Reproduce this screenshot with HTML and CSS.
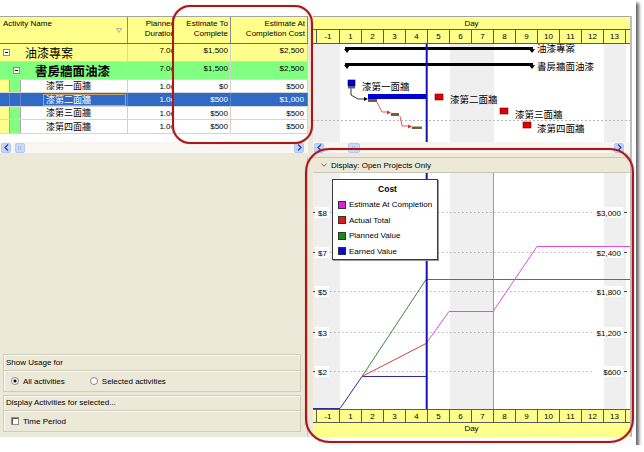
FILE: index.html
```html
<!DOCTYPE html>
<html lang="zh-Hant">
  <head>
    <meta charset="UTF-8" />
    <meta name="viewport" content="width=device-width, initial-scale=1.0" />
    <title>Cost Usage Profile</title>
    <link rel="stylesheet" href="styles.css">
  </head>
  <body>
    <div class="frame">
      <div class="app">

        <!-- activity table -->
        <section class="table-pane">
          <div class="thead">
            <div class="th col-name">
              <span>Activity Name</span>
              <svg class="filter" width="6" height="5" viewBox="0 0 6 5"><path d="M0.5 0.5 H5.5 L3 4.5 Z" fill="none" stroke="#9a9a9a" stroke-width="0.8"/></svg>
            </div>
            <div class="th col-dur"><span class="clip">Planned<br>Duration</span></div>
            <div class="th col-etc">Estimate To<br>Complete</div>
            <div class="th col-eac">Estimate At<br>Completion Cost</div>
          </div>

          <div class="tr proj">
            <div class="td col-name"><span class="tog"></span><span class="cjk title">油漆專案</span></div>
            <div class="td col-dur"><span class="clip">7.0d</span></div>
            <div class="td col-etc">$1,500</div>
            <div class="td col-eac">$2,500</div>
          </div>
          <div class="tr wbs">
            <div class="td col-name"><span class="band y"></span><span class="tog"></span><span class="cjk title bold">書房牆面油漆</span></div>
            <div class="td col-dur"><span class="clip">7.0d</span></div>
            <div class="td col-etc">$1,500</div>
            <div class="td col-eac">$2,500</div>
          </div>
          <div class="tr act short">
            <div class="td col-name"><span class="band y"></span><span class="band g"></span><span class="cjk name">漆第一面牆</span></div>
            <div class="td col-dur"><span class="clip">1.0d</span></div>
            <div class="td col-etc">$0</div>
            <div class="td col-eac">$500</div>
          </div>
          <div class="tr act sel">
            <div class="td col-name"><span class="band y"></span><span class="band g"></span><span class="cjk name">漆第二面牆</span></div>
            <div class="td col-dur"><span class="clip">1.0d</span></div>
            <div class="td col-etc">$500</div>
            <div class="td col-eac">$1,000</div>
          </div>
          <div class="tr act short">
            <div class="td col-name"><span class="band y"></span><span class="band g"></span><span class="cjk name">漆第三面牆</span></div>
            <div class="td col-dur"><span class="clip">1.0d</span></div>
            <div class="td col-etc">$500</div>
            <div class="td col-eac">$500</div>
          </div>
          <div class="tr act">
            <div class="td col-name"><span class="band y"></span><span class="band g"></span><span class="cjk name">漆第四面牆</span></div>
            <div class="td col-dur"><span class="clip">1.0d</span></div>
            <div class="td col-etc">$500</div>
            <div class="td col-eac">$500</div>
          </div>
          <div class="tbody-rest"></div>

          <div class="hscroll">
            <span class="sb-btn"><svg width="5" height="7" viewBox="0 0 5 7"><path d="M4 0.5 L1 3.5 L4 6.5" fill="none" stroke="#2b4c9c" stroke-width="1.4"/></svg></span>
            <span class="sb-thumb t-left"></span>
            <span class="sb-fill"></span>
            <span class="sb-btn b-right-l"><svg width="5" height="7" viewBox="0 0 5 7"><path d="M1 0.5 L4 3.5 L1 6.5" fill="none" stroke="#2b4c9c" stroke-width="1.4"/></svg></span>
          </div>
        </section>

        <!-- gantt -->
        <section class="gantt-pane">
          <div class="ts-title top">Day</div>
          <div class="ts-days top">
            <span class="d part"></span><span class="d first">-1</span><span class="d">1</span><span class="d">2</span><span class="d">3</span><span class="d">4</span><span class="d">5</span><span class="d">6</span><span class="d">7</span><span class="d">8</span><span class="d">9</span><span class="d">10</span><span class="d">11</span><span class="d">12</span><span class="d">13</span><span class="d part"></span>
          </div>

          <svg class="gantt" width="317" height="98" viewBox="0 0 317 98">
            <rect x="0" y="0" width="27" height="98" fill="#efefef"/>
            <rect x="137" y="0" width="44" height="98" fill="#efefef"/>
            <rect x="291" y="0" width="22" height="98" fill="#efefef"/>
            <line x1="0" y1="76.5" x2="317" y2="76.5" stroke="#b8b8b8" stroke-dasharray="2 2"/>

            <!-- summary bars -->
            <rect x="32" y="3" width="188" height="3" fill="#000"/>
            <path d="M31 5 H37 L34 9 Z M216 5 H222 L219 9 Z" fill="#000"/>
            <text x="224" y="7.5" class="glabel">油漆專案</text>
            <rect x="32" y="19" width="188" height="3" fill="#000"/>
            <path d="M31 21 H37 L34 25 Z M216 21 H222 L219 25 Z" fill="#000"/>
            <text x="224" y="26" class="glabel">書房牆面油漆</text>

            <!-- activity 1 -->
            <rect x="35" y="36" width="7" height="6" fill="#0000d0" stroke="#000060" stroke-width="0.6"/>
            <rect x="35" y="42" width="7" height="2.5" fill="#606060"/>
            <text x="49" y="45.5" class="glabel">漆第一面牆</text>
            <path d="M38 44.5 V51 L45 55 H53" fill="none" stroke="#000" stroke-width="0.8"/>
            <path d="M51 53 L55 55 L51 57 Z" fill="#000"/>

            <!-- activity 2 -->
            <rect x="55" y="50" width="59" height="5" fill="#0000d0"/>
            <rect x="55" y="55" width="9" height="3" fill="#6d6232"/>
            <rect x="122" y="50" width="8" height="6" fill="#e00000" stroke="#700" stroke-width="0.6"/>
            <text x="137" y="59" class="glabel">漆第二面牆</text>

            <!-- baseline links -->
            <path d="M64 58 L69 68 H75" fill="none" stroke="#e03030" stroke-width="0.8"/>
            <path d="M74 66.5 L78 68.5 L74 70.5 Z" fill="#e03030"/>
            <rect x="78" y="69" width="8" height="3" fill="#6d6232"/>
            <path d="M87 72 L89 82 H96" fill="none" stroke="#e03030" stroke-width="0.8"/>
            <path d="M95 80.5 L99 82.5 L95 84.5 Z" fill="#e03030"/>
            <rect x="99" y="82.5" width="10" height="2.5" fill="#6d6232"/>

            <!-- activity 3 / 4 -->
            <rect x="187" y="64" width="8" height="6" fill="#e00000" stroke="#700" stroke-width="0.6"/>
            <text x="202" y="73.5" class="glabel">漆第三面牆</text>
            <rect x="210" y="78" width="8" height="6" fill="#e00000" stroke="#700" stroke-width="0.6"/>
            <text x="224" y="87.5" class="glabel">漆第四面牆</text>

            <line x1="113.7" y1="0" x2="113.7" y2="98" stroke="#1414b4" stroke-width="2"/>
          </svg>

          <div class="hscroll">
            <span class="sb-btn"><svg width="5" height="7" viewBox="0 0 5 7"><path d="M4 0.5 L1 3.5 L4 6.5" fill="none" stroke="#2b4c9c" stroke-width="1.4"/></svg></span>
            <span class="sb-thumb t-gantt"></span>
            <span class="sb-fill"></span>
            <span class="sb-btn b-right-g"><svg width="5" height="7" viewBox="0 0 5 7"><path d="M1 0.5 L4 3.5 L1 6.5" fill="none" stroke="#2b4c9c" stroke-width="1.4"/></svg></span>
          </div>
        </section>

        <!-- options -->
        <section class="options-pane">
          <div class="group g-usage">
            <div class="group-head">Show Usage for</div>
            <div class="group-body">
              <span class="radio on"></span><span class="opt-label">All activities</span>
              <span class="radio second"></span><span class="opt-label">Selected activities</span>
            </div>
          </div>
          <div class="group g-display">
            <div class="group-head">Display Activities for selected...</div>
            <div class="group-body">
              <span class="check"></span><span class="opt-label">Time Period</span>
            </div>
          </div>
        </section>

        <!-- cost profile -->
        <section class="chart-pane">
          <div class="disp-bar">
            <svg width="6" height="4" viewBox="0 0 6 4"><path d="M0.5 0.5 L3 3.3 L5.5 0.5" fill="none" stroke="#666" stroke-width="0.9"/></svg>
            <span>Display: Open Projects Only</span>
          </div>

          <div class="chart">
            <svg width="317" height="236" viewBox="0 0 317 236">
              <rect x="0" y="0" width="27" height="236" fill="#efefef"/>
              <rect x="137" y="0" width="44" height="236" fill="#efefef"/>
              <rect x="291" y="0" width="22" height="236" fill="#efefef"/>
              <line x1="180.5" y1="0" x2="180.5" y2="236" stroke="#9c9c9c"/>

              <g stroke="#b4b4b4" stroke-dasharray="1.5 2.5">
                <line x1="17" y1="39.5" x2="281" y2="39.5"/>
                <line x1="17" y1="79.5" x2="281" y2="79.5"/>
                <line x1="17" y1="118.5" x2="281" y2="118.5"/>
                <line x1="17" y1="159.5" x2="281" y2="159.5"/>
                <line x1="17" y1="198.5" x2="281" y2="198.5"/>
              </g>

              <g fill="#fff">
                <rect x="2" y="34" width="14" height="11"/>
                <rect x="2" y="74" width="14" height="11"/>
                <rect x="2" y="113" width="14" height="11"/>
                <rect x="2" y="154" width="14" height="11"/>
                <rect x="2" y="193" width="14" height="11"/>
                <rect x="281" y="34" width="29" height="11"/>
                <rect x="281" y="74" width="29" height="11"/>
                <rect x="281" y="113" width="29" height="11"/>
                <rect x="281" y="154" width="29" height="11"/>
                <rect x="289" y="193" width="21" height="11"/>
              </g>
              <g stroke="#444">
                <line x1="0" y1="39.5" x2="2" y2="39.5"/>
                <line x1="0" y1="79.5" x2="2" y2="79.5"/>
                <line x1="0" y1="118.5" x2="2" y2="118.5"/>
                <line x1="0" y1="159.5" x2="2" y2="159.5"/>
                <line x1="0" y1="198.5" x2="2" y2="198.5"/>
                <line x1="311" y1="39.5" x2="314" y2="39.5"/>
                <line x1="311" y1="79.5" x2="314" y2="79.5"/>
                <line x1="311" y1="118.5" x2="314" y2="118.5"/>
                <line x1="311" y1="159.5" x2="314" y2="159.5"/>
                <line x1="311" y1="198.5" x2="314" y2="198.5"/>
              </g>
              <g class="axis-label">
                <text x="5" y="42.5">$8</text>
                <text x="5" y="82.5">$7</text>
                <text x="5" y="121.5">$5</text>
                <text x="5" y="162.5">$3</text>
                <text x="5" y="201.5">$2</text>
              </g>
              <g class="axis-label" text-anchor="end">
                <text x="308" y="42.5">$3,000</text>
                <text x="308" y="82.5">$2,400</text>
                <text x="308" y="121.5">$1,800</text>
                <text x="308" y="162.5">$1,200</text>
                <text x="308" y="201.5">$600</text>
              </g>

              <g fill="none" stroke-width="1">
                <path d="M0 235.5 H27 L49 203.5 H113" stroke="#2a2aa8"/>
                <path d="M49 203.5 L113 106.5 H317" stroke="#3a8a3a"/>
                <path d="M49 203.5 L113 170.5" stroke="#d24040"/>
                <path d="M113 170.5 L136 138.5 H180 L224 73.5 H317" stroke="#dd4ee0"/>
              </g>
              <line x1="113.7" y1="0" x2="113.7" y2="236" stroke="#1414b4" stroke-width="2"/>
            </svg>

            <div class="legend">
              <div class="lg-title">Cost</div>
              <div class="lg-item"><i class="sw sw-eac"></i>Estimate At Completion</div>
              <div class="lg-item"><i class="sw sw-act"></i>Actual Total</div>
              <div class="lg-item"><i class="sw sw-pv"></i>Planned Value</div>
              <div class="lg-item"><i class="sw sw-ev"></i>Earned Value</div>
            </div>
          </div>

          <div class="ts-days bottom">
            <span class="d part"></span><span class="d first">-1</span><span class="d">1</span><span class="d">2</span><span class="d">3</span><span class="d">4</span><span class="d">5</span><span class="d">6</span><span class="d">7</span><span class="d">8</span><span class="d">9</span><span class="d">10</span><span class="d">11</span><span class="d">12</span><span class="d">13</span><span class="d part"></span>
          </div>
          <div class="ts-title bottom">Day</div>
        </section>
      </div>

      <!-- review marks -->
      <div class="mark mark-cols"></div>
      <div class="mark mark-chart"></div>
    </div>
  </body>
</html>
```

FILE: styles.css
```css
* {
  margin: 0;
  padding: 0;
  box-sizing: border-box;
}

:root {
  --yellow: #ffff8c;
  --green: #80ff80;
  --beige: #ece9d8;
  --select: #316ac5;
}

body {
  background: #fff;
  color: #000;
  font-family: "Liberation Sans", Arial, sans-serif;
  font-size: 8px;
}

.cjk {
  font-family: "Noto Sans CJK TC", "Noto Sans CJK SC", sans-serif;
}

.frame {
  position: relative;
  width: 636px;
  height: 445px;
  padding-top: 16px;
  background: #fff;
  box-shadow: 3px 3px 3px rgba(0, 0, 0, 0.6);
}

.app {
  display: grid;
  grid-template-columns: 308px 5px 317px;
  grid-template-rows: 137px 4px 280px;
  width: 632px;
  border-right: 2px solid #bdbdbd;
  background: var(--beige);
}

/* ---------- activity table ---------- */

.table-pane {
  grid-area: 1 / 1;
  display: flex;
  flex-direction: column;
  background: #fff;
}

.thead {
  display: flex;
  height: 28px;
  flex: none;
  background: var(--yellow);
  border-top: 1px solid #a4a4a4;
  border-bottom: 1px solid #6e6e6e;
}

.th {
  padding: 2px 2px 0 0;
  line-height: 10px;
  text-align: right;
  white-space: nowrap;
  overflow: hidden;
  border-right: 1px solid #8a8a8a;
}

.th.col-name {
  display: flex;
  justify-content: space-between;
  padding-left: 3px;
  text-align: left;
}

.filter {
  margin: 9px 3px 0 0;
}

.col-name { width: 128px; flex: none; }
.col-dur  { width: 45px;  flex: none; }
.col-etc  { width: 58px;  flex: none; }
.col-eac  { width: 77px;  flex: none; }

.th.col-dur,
.td.col-dur {
  padding-right: 0;
}

.clip {
  display: block;
  margin-right: -3px;
}

.tr {
  display: flex;
  height: 14px;
  flex: none;
  border-bottom: 1px solid #d6d6d6;
}

.tr.short {
  height: 13px;
}

.td {
  display: flex;
  align-items: center;
  justify-content: flex-end;
  padding-right: 2px;
  white-space: nowrap;
  overflow: hidden;
  border-right: 1px solid #d2d2d2;
}

.td.col-eac {
  padding-right: 3px;
}

.td.col-name {
  justify-content: flex-start;
  align-items: stretch;
  padding-right: 0;
}

.proj,
.wbs {
  height: 18px;
}

.proj .td,
.wbs .td {
  align-items: flex-start;
  padding-top: 2px;
}

.proj .td.col-name,
.wbs .td.col-name {
  align-items: center;
  padding-top: 0;
}

.proj {
  background: var(--yellow);
}

.proj .td.col-name {
  padding-left: 3px;
}

.wbs {
  background: var(--green);
}

.tog {
  width: 7px;
  height: 7px;
  flex: none;
  border: 1px solid #8c8c8c;
  background: linear-gradient(#000, #000) center / 3px 1px no-repeat, #fff;
}

.wbs .tog {
  margin-left: 3px;
}

.title {
  margin-left: 15px;
  font-size: 12px;
  line-height: 14px;
}

.title.bold {
  font-size: 12.5px;
  font-weight: 700;
}

.band {
  flex: none;
  border-right: 1px solid #a9a9a9;
}

.band.y {
  width: 10px;
  background: var(--yellow);
}

.band.g {
  width: 11px;
  background: var(--green);
}

.name {
  width: 83px;
  margin-left: 22px;
  padding-left: 2px;
  font-size: 9px;
  line-height: 10px;
  border: 1px solid transparent;
  align-self: center;
}

.sel {
  background: var(--select);
  color: #fff;
}

.sel .band {
  background: var(--select);
  border-color: #5d83c9;
}

.sel .td {
  border-color: #5d83c9;
}

.sel .name {
  border-color: #c9a46a;
}

.tbody-rest {
  flex: 1;
}

/* ---------- scroll bars ---------- */

.hscroll {
  display: flex;
  align-items: center;
  height: 11px;
  flex: none;
  background: #f7f6f2;
}

.sb-btn {
  display: flex;
  align-items: center;
  justify-content: center;
  width: 10px;
  height: 10px;
  flex: none;
  margin-left: 1px;
  background: #c5d5f9;
  border: 1px solid #b3c6f2;
  border-radius: 2px;
}

.sb-thumb {
  width: 10px;
  height: 10px;
  flex: none;
  background: linear-gradient(90deg, transparent 3px, #a9bde9 3px, #a9bde9 4px, transparent 4px, transparent 5px, #a9bde9 5px, #a9bde9 6px, transparent 6px) center / 10px 4px no-repeat, #cbdafa;
  border: 1px solid #b6c8f1;
  border-radius: 2px;
}

.t-left {
  margin-left: 4px;
}

.t-gantt {
  margin-left: 24px;
  width: 12px;
}

.sb-fill {
  flex: 1;
}

.b-right-l {
  margin-right: 4px;
}

.b-right-g {
  margin-right: 6px;
}

/* ---------- gantt ---------- */

.gantt-pane {
  grid-area: 1 / 3;
  display: flex;
  flex-direction: column;
  background: #fff;
}

.ts-title {
  height: 14px;
  flex: none;
  line-height: 13px;
  text-align: center;
  background: var(--yellow);
}

.ts-title.top {
  border-top: 1px solid #a4a4a4;
  border-bottom: 1px solid #5a5a5a;
}

.ts-days {
  display: flex;
  height: 14px;
  flex: none;
  background: var(--yellow);
}

.ts-days.top {
  border-bottom: 1px solid #5a5a5a;
}

.ts-days.bottom {
  border-top: 1px solid #5a5a5a;
  border-bottom: 1px solid #5a5a5a;
}

.ts-title.bottom {
  line-height: 12px;
}

.d {
  width: 22px;
  flex: none;
  line-height: 13px;
  text-align: center;
  border-right: 1px solid #5a5a5a;
}

.d.part {
  width: 4px;
}

.d.part:last-child {
  border-right: none;
}

.d.first {
  width: 23px;
}

.gantt {
  display: block;
  flex: none;
}

.glabel {
  font-family: "Noto Sans CJK TC", "Noto Sans CJK SC", sans-serif;
  font-size: 9.5px;
  fill: #000;
}

/* ---------- options ---------- */

.options-pane {
  grid-area: 3 / 1;
  display: flex;
  flex-direction: column;
  justify-content: flex-end;
  gap: 3px;
  padding: 0 6px 5px 3px;
  border-right: 1px solid #c9c6b6;
}

.group {
  border: 1px solid #cfccbc;
  box-shadow: inset 1px 1px 0 #fbfaf6;
}

.group-head {
  height: 16px;
  padding-left: 2px;
  line-height: 15px;
  border-bottom: 1px solid #cfccbc;
  box-shadow: 0 1px 0 #fbfaf6;
}

.g-display .group-head {
  height: 15px;
  line-height: 14px;
}

.group-body {
  display: flex;
  align-items: center;
  height: 20px;
  padding-left: 7px;
}

.opt-label {
  margin-left: 4px;
}

.radio {
  width: 8px;
  height: 8px;
  flex: none;
  border-radius: 50%;
  border: 1px solid #8b8b8b;
  background: #fff;
}

.radio.on {
  background: radial-gradient(circle, #111 0 1.3px, #fff 1.8px);
}

.radio.second {
  margin-left: 25px;
}

.check {
  width: 8px;
  height: 8px;
  flex: none;
  background: #fff;
  border: 1px solid #8d8d8d;
  box-shadow: inset 1px 1px 0 #5a5a5a;
}

/* ---------- cost chart ---------- */

.chart-pane {
  grid-area: 3 / 3;
  display: flex;
  flex-direction: column;
  background: #fff;
}

.disp-bar {
  display: flex;
  align-items: center;
  gap: 4px;
  height: 16px;
  flex: none;
  padding-left: 8px;
  background: var(--beige);
  border-top: 1px solid #c9c6b6;
  border-bottom: 1px solid #c9c6b6;
}

.chart {
  position: relative;
  height: 236px;
  flex: none;
}

.chart svg {
  display: block;
}

.axis-label {
  font-family: "Liberation Sans", Arial, sans-serif;
  font-size: 8px;
  fill: #000;
}

.legend {
  position: absolute;
  left: 19px;
  top: 6px;
  width: 106px;
  height: 81px;
  padding: 0 0 0 5px;
  background: #fff;
  border: 1px solid #3a3a3a;
  box-shadow: 1px 1px 0 #9a9a9a;
}

.lg-title {
  height: 17px;
  padding-top: 4px;
  line-height: 10px;
  text-align: center;
  font-size: 8.5px;
  font-weight: 700;
}

.lg-item {
  display: flex;
  align-items: center;
  gap: 3px;
  height: 15.5px;
}

.sw {
  width: 8px;
  height: 8px;
  flex: none;
  border: 1px solid #333;
}

.sw-eac { background: #e020e0; }
.sw-act { background: #e01818; }
.sw-pv  { background: #158a15; }
.sw-ev  { background: #0a0ad8; }

/* ---------- review marks ---------- */

.mark {
  position: absolute;
  border: 2px solid #a9191c;
  box-shadow: 0 0 1px #d66, inset 0 0 1px #d66;
}

.mark-cols {
  left: 172px;
  top: 5px;
  width: 141px;
  height: 139px;
  border-radius: 18px;
}

.mark-chart {
  left: 305px;
  top: 148px;
  width: 329px;
  height: 295px;
  border-radius: 24px;
}
```
